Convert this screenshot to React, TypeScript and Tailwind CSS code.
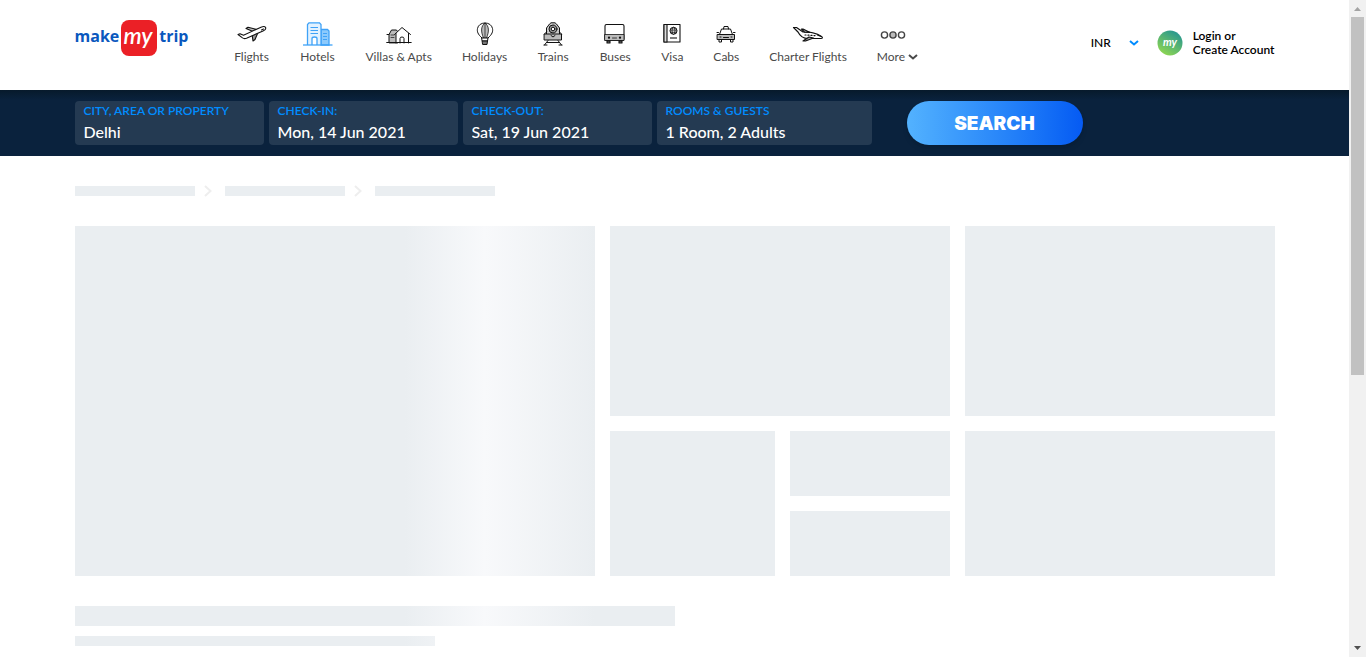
import type { ReactNode } from "react";

type NavItem = { label: string; icon: ReactNode };

const line = {
  fill: "none",
  stroke: "#111",
  strokeWidth: 1.1,
  strokeLinecap: "round" as const,
  strokeLinejoin: "round" as const,
};

const FlightIcon = () => (
  <svg width="36" height="24" viewBox="-3 0 36 24" {...line}>
    <path d="M9 6.500l2-1.300 8 2-3.500 2z" fill="#bbb" />
    <path d="M14 13l7-2.500-3 7-2 1.500-.8-5.500z" fill="#999" />
    <path d="M1 12.500l2-.8 3.500 1.500L24 5.200c2-.8 4-.7 4.600.3.500 1-.5 2.500-2.600 3.600L9.500 16.200c-1.500.6-3 .4-4-.3z" fill="#fff" />
    <path d="M24.500 8l2-1" />
  </svg>
);

const HotelIcon = () => (
  <svg width="36" height="24" viewBox="-3 0 36 24" fill="none" stroke="#3fa2f7" strokeWidth="1.300">
    <path d="M18 7.500h6.500l1.500 1.500v14h-8z" fill="#8dcafc" />
    <path d="M4.500 23V2.500L6 .8h10.500L18 2.500V23" fill="#e3f2ff" />
    <path d="M7.500 5.500h7.500M7.500 8.500h7.500M7.500 11.500h7.500M20 11.500h4M20 14.500h4M20 17.500h4" strokeWidth="1" />
    <path d="M9 23v-6.500q0-1.500 2.500-1.500t2.500 1.500V23" fill="#fff" />
    <path d="M0 23h29.500" />
  </svg>
);

const VillaIcon = () => (
  <svg width="26" height="24" viewBox="0 0 26 24" {...line} strokeWidth="1">
    <path d="M3 20.500v-8l2.500-4.500h5l1.500 2v10.500z" fill="#bbb" />
    <path d="M5 13h3M5 15.500h3" strokeWidth=".7" />
    <path d="M10 21V11l6-5.500 6.500 6V21" fill="#fff" stroke="none" />
    <path d="M10 21v-9.500M22.500 21v-9.500M8.500 12.500L16 5.500l8.500 7M14 21v-4.500q0-1.500 2-1.500t2 1.500V21M.7 20.500h24.500M1 12.500h2" />
  </svg>
);

const HolidayIcon = () => (
  <svg width="18" height="24" viewBox="0 0 18 24" {...line} strokeWidth="1">
    <path d="M6 16C1.500 12 1 9.500 1.500 6.500 2.200 3 5.300 1 9 1s6.800 2 7.500 5.500c.5 3 0 5.500-4.500 9.500z" fill="#fff" />
    <path d="M7.500 16C4.500 9 5 4 9 1c4 3 4.500 8 1.500 15z" fill="#bbb" strokeWidth=".8" />
    <path d="M9 1v15" strokeWidth=".7" />
    <path d="M6 16h6l-.5 3h-5z" fill="#fff" />
    <path d="M6.500 19h5l-.5 3.500H7z" fill="#777" />
  </svg>
);

const TrainIcon = () => (
  <svg width="32" height="24" viewBox="-6 0 32 24" {...line} strokeWidth="1">
    <path d="M3.500 13V6L6.500 2 8 .8h4L13.500 2l3 4V13z" fill="#ccc" />
    <path d="M1.500 12h17v6h-17z" fill="#bbb" />
    <circle cx="10" cy="7" r="4" fill="#999" />
    <circle cx="10" cy="7" r="1.800" fill="#fff" />
    <path d="M1.500 12L3.500 10M18.500 12l-2-2M8 13.500l2 1.500 2-1.500M5 18.500l-3.500 4.500M15 18.500l3.500 4.500M4 20.500h12M1 23h3M16 23h3" />
  </svg>
);

const BusIcon = () => (
  <svg width="32" height="24" viewBox="-5 0 32 24" {...line}>
    <rect x="1" y="2.500" width="19" height="16" rx="1.500" fill="#fff" />
    <path d="M1 12.500h19v6H1z" fill="#bbb" strokeWidth=".8" />
    <path d="M3 19h3v2H3zM15 19h3v2h-3z" fill="#777" />
    <path d="M8.500 16h4" strokeWidth=".8" />
    <circle cx="5" cy="15.700" r=".6" />
    <circle cx="16" cy="15.700" r=".6" />
  </svg>
);

const VisaIcon = () => (
  <svg width="18" height="24" viewBox="0 0 18 24" {...line} strokeLinecap="butt">
    <path d="M1 2.500h16v17.500H1z" fill="#fff" />
    <path d="M1 2.500h3V20H1z" fill="#ddd" />
    <circle cx="10.500" cy="8.800" r="3.500" strokeWidth="1" />
    <ellipse cx="10.500" cy="8.800" rx="1.500" ry="3.500" strokeWidth=".8" />
    <path d="M7 8.800h7M7.500 7h6M7.500 10.600h6" strokeWidth=".7" />
    <path d="M7 16h7" />
  </svg>
);

const CabIcon = () => (
  <svg width="20" height="24" viewBox="0 0 20 24" {...line} strokeWidth="1">
    <path d="M7.500 7l.5-2.500h4l.5 2.500M3.500 12.500l2-5.500h9l2 5.500" />
    <path d="M1.500 12.500h17v5h-17z" fill="#bbb" />
    <path d="M1 10.500h1.500M17.500 10.500H19M3 17.500v2.500h2.500v-2.500M14.500 17.500v2.500H17v-2.500M7.500 15.500h5M4 15h1M15 15h1" />
  </svg>
);

const CharterIcon = () => (
  <svg width="32" height="24" viewBox="0 0 32 24" {...line} strokeWidth="1.200">
    <path d="M6 10L1.500 5.500h3L11 10c6-.5 14 1.500 18.500 4.500 1.500 1 1 2-.5 2H16C11 16.500 8 14 6 10z" fill="#fff" />
    <path d="M18 10.500L11 7H9.500l3 3.200zM17 15l-6 4h2.500l8-3z" fill="#aaa" />
    <path d="M13 13h1M16 13.200h1M19 13.400h1M22 13.600h1M25.500 13l3 1.200" />
  </svg>
);

const MoreIcon = () => (
  <svg width="26" height="24" viewBox="0 0 26 24" fill="none" stroke="#444" strokeWidth="1.400">
    <circle cx="4.500" cy="13" r="3.100" />
    <circle cx="13" cy="13" r="3.100" fill="#bbb" />
    <circle cx="21.500" cy="13" r="3.100" />
  </svg>
);

const navItems: NavItem[] = [
  { label: "Flights", icon: <FlightIcon /> },
  { label: "Hotels", icon: <HotelIcon /> },
  { label: "Villas & Apts", icon: <VillaIcon /> },
  { label: "Holidays", icon: <HolidayIcon /> },
  { label: "Trains", icon: <TrainIcon /> },
  { label: "Buses", icon: <BusIcon /> },
  { label: "Visa", icon: <VisaIcon /> },
  { label: "Cabs", icon: <CabIcon /> },
  { label: "Charter Flights", icon: <CharterIcon /> },
];

const fields = [
  { id: "city", label: "CITY, AREA OR PROPERTY", value: "Delhi", width: "w-[189px]" },
  { id: "checkin", label: "CHECK-IN:", value: "Mon, 14 Jun 2021", width: "w-[189px]" },
  { id: "checkout", label: "CHECK-OUT:", value: "Sat, 19 Jun 2021", width: "w-[189px]" },
  { id: "guests", label: "ROOMS & GUESTS", value: "1 Room, 2 Adults", width: "w-[215px]" },
];

const Chevron = ({ className }: { className: string }) => (
  <svg className={className} width="10" height="6" viewBox="0 0 10 6" fill="none" stroke="currentColor" strokeWidth="2">
    <path d="M1 1l4 3.500L9 1" />
  </svg>
);

const Crumb = () => <div className="h-2.5 w-[120px] bg-[#eaeef1]" />;

const CrumbArrow = () => (
  <svg width="30" height="12" viewBox="0 0 30 12" fill="none" stroke="#eee" strokeWidth="2">
    <path d="M10 1l5.500 5L10 11" />
  </svg>
);

const shimmer =
  "bg-[linear-gradient(to_right,#eaeef1_330px,#f8f9fb_410px,#eaeef1_520px)]";

function Header() {
  return (
    <header className="h-[90px] bg-white">
      <div className="mx-auto flex max-w-[1200px] items-start">
        <a
          href="#home"
          aria-label="makemytrip"
          className="mt-5 flex w-[159px] shrink-0 items-center gap-[2px] font-['Open_Sans',sans-serif] text-base leading-9 font-bold text-[#0a58be]"
        >
          <span className="-mt-1">make</span>
          <svg width="36" height="36" viewBox="0 0 36 36">
            <rect width="36" height="36" rx="8" fill="#eb2026" />
            <text
              x="17"
              y="24"
              textAnchor="middle"
              fill="#fff"
              fontFamily="Lato, sans-serif"
              fontStyle="italic"
              fontWeight="600"
              fontSize="23"
            >
              my
            </text>
          </svg>
          <span className="-mt-1">trip</span>
        </a>
        <nav className="mt-[22px] flex gap-[30px] text-[12px] leading-4 whitespace-nowrap text-[#4a4a4a]">
          {navItems.map((item) => (
            <a key={item.label} href="#nav" className="flex flex-col items-center gap-[3px]">
              {item.icon}
              <span>{item.label}</span>
            </a>
          ))}
          <button type="button" className="flex flex-col items-start gap-[3px]">
            <span className="pl-[3px]">
              <MoreIcon />
            </span>
            <span className="flex items-center gap-[3px]">
              More <Chevron className="" />
            </span>
          </button>
        </nav>
        <div className="mt-[29px] ml-auto flex items-center text-black">
          <select aria-label="Currency" className="w-[38px] appearance-none text-[12px] leading-4 font-medium">
            <option>INR</option>
          </select>
          <Chevron className="mr-[18px] text-[#008cff]" />
          <a href="#login" className="flex items-center gap-2.5 text-[12px] leading-[14px] font-semibold">
            <svg width="26" height="26" viewBox="0 0 26 26">
              <defs>
                <linearGradient id="avatar" x1="0.200" y1="1" x2="0.800" y2="0">
                  <stop offset="0" stopColor="#93d94e" />
                  <stop offset="1" stopColor="#219393" />
                </linearGradient>
              </defs>
              <circle cx="13" cy="13" r="12.500" fill="url(#avatar)" />
              <text
                x="13"
                y="16"
                textAnchor="middle"
                fill="#fff"
                fontFamily="Lato, sans-serif"
                fontStyle="italic"
                fontWeight="700"
                fontSize="11"
              >
                my
              </text>
            </svg>
            <span>
              Login or
              <br />
              Create Account
            </span>
          </a>
        </div>
      </div>
    </header>
  );
}

function SearchBar() {
  return (
    <form className="bg-[#0a223d] bg-[linear-gradient(to_bottom,#071a2b,#0a223d_10px)] py-[11px]">
      <div className="mx-auto flex max-w-[1200px] gap-[5px]">
        {fields.map((field) => (
          <div key={field.id} className={`${field.width} h-11 rounded bg-[#243a52] px-[9px] pt-[3px]`}>
            <label htmlFor={field.id} className="block text-[12px] leading-[14px] font-semibold text-[#008cff]">
              {field.label}
            </label>
            <input
              id={field.id}
              defaultValue={field.value}
              className="mt-1 block w-full bg-transparent text-base leading-5 font-medium text-white outline-none"
            />
          </div>
        ))}
        <button
          type="button"
          className="ml-[30px] h-11 w-44 rounded-full bg-linear-to-r from-[#53b2fe] to-[#065af3] pt-0.5 font-[Inter,sans-serif] text-[19px] font-black text-white shadow-md"
        >
          SEARCH
        </button>
      </div>
    </form>
  );
}

function Placeholders() {
  return (
    <main className="mx-auto max-w-[1200px] pt-[29px]">
      <div className="flex items-center">
        <Crumb />
        <CrumbArrow />
        <Crumb />
        <CrumbArrow />
        <Crumb />
      </div>
      <div className="mt-[29px] grid grid-cols-[520fr_340fr_310fr] gap-[15px]">
        <div className={`h-[350px] ${shimmer}`} />
        <div className="grid grid-rows-[190px_145px] gap-[15px]">
          <div className="bg-[#eaeef1]" />
          <div className="grid grid-cols-[165fr_160fr] gap-[15px]">
            <div className="bg-[#eaeef1]" />
            <div className="grid grid-rows-2 gap-[15px]">
              <div className="bg-[#eaeef1]" />
              <div className="bg-[#eaeef1]" />
            </div>
          </div>
        </div>
        <div className="grid grid-rows-[190px_145px] gap-[15px]">
          <div className="bg-[#eaeef1]" />
          <div className="bg-[#eaeef1]" />
        </div>
      </div>
      <div className={`mt-[30px] h-5 w-1/2 ${shimmer}`} />
      <div className={`mt-2.5 h-2.5 w-[30%] ${shimmer}`} />
    </main>
  );
}

function ScrollTrack() {
  return (
    <div className="flex w-[17px] shrink-0 flex-col items-center bg-[#f1f1f1]" aria-hidden="true">
      <svg width="17" height="17" viewBox="0 0 17 17" className="shrink-0">
        <path d="M5 11l3.500-4L12 11z" fill="#a3a3a3" />
      </svg>
      <div className="flex w-[13px] flex-1 flex-col">
        <div className="h-[57.5%] bg-[#c1c1c1]" />
      </div>
      <svg width="17" height="17" viewBox="0 0 17 17" className="shrink-0">
        <path d="M5 6l3.500 4L12 6z" fill="#505050" />
      </svg>
    </div>
  );
}

export default function App() {
  return (
    <div className="flex h-screen bg-white font-[Lato,sans-serif]">
      <div className="min-w-0 flex-1 overflow-hidden">
        <Header />
        <SearchBar />
        <Placeholders />
      </div>
      <ScrollTrack />
    </div>
  );
}
